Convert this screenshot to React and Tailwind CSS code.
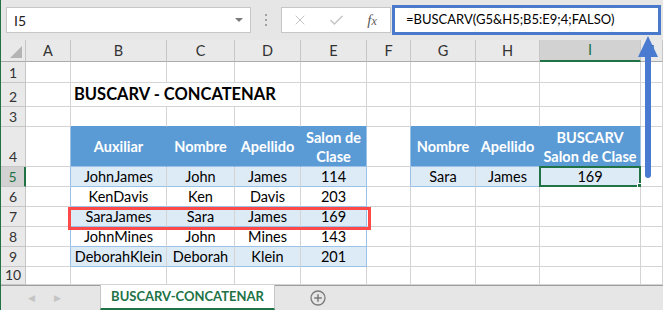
import React from "react";
import { X, Check } from "lucide-react";

const COLS = ["A", "B", "C", "D", "E", "F", "G", "H", "I", "J"];

const DATA = {
  4: { 2: ["Auxiliar"], 3: ["Nombre"], 4: ["Apellido"], 5: ["Salon de", "Clase"], 7: ["Nombre"], 8: ["Apellido"], 9: ["BUSCARV", "Salon de Clase"] },
  5: { 2: ["JohnJames"], 3: ["John"], 4: ["James"], 5: ["114"], 7: ["Sara"], 8: ["James"], 9: ["169"] },
  6: { 2: ["KenDavis"], 3: ["Ken"], 4: ["Davis"], 5: ["203"] },
  7: { 2: ["SaraJames"], 3: ["Sara"], 4: ["James"], 5: ["169"] },
  8: { 2: ["JohnMines"], 3: ["John"], 4: ["Mines"], 5: ["143"] },
  9: { 2: ["DeborahKlein"], 3: ["Deborah"], 4: ["Klein"], 5: ["201"] },
};

const inT1 = (r, c) => r >= 4 && r <= 9 && c >= 2 && c <= 5;
const inT2 = (r, c) => r >= 4 && r <= 5 && c >= 7 && c <= 9;

function cellClasses(r, c) {
  let bg = "bg-white text-black";
  let weight = "font-normal";
  if ((inT1(r, c) || inT2(r, c)) && r === 4) {
    bg = "bg-[#5b9bd5] text-white";
    weight = "font-bold";
  } else if ((inT1(r, c) && (r === 5 || r === 7 || r === 9)) || (inT2(r, c) && r === 5)) {
    bg = "bg-[#ddebf7] text-black";
  }
  let br = "border-r-[#d4d4d4]";
  if (r === 4 && ((c >= 2 && c <= 4) || (c >= 7 && c <= 8))) br = "border-r-[#5b9bd5]";
  if ((c === 1 || c === 5) && r >= 4 && r <= 9) br = "border-r-[#9bc2e6]";
  if ((c === 6 || c === 9) && r >= 4 && r <= 5) br = "border-r-[#9bc2e6]";
  let bb = "border-b-[#d4d4d4]";
  if (r === 3 && ((c >= 2 && c <= 5) || (c >= 7 && c <= 9))) bb = "border-b-[#5b9bd5]";
  if (inT1(r, c) || inT2(r, c)) bb = "border-b-[#9bc2e6]";
  return `${bg} ${weight} ${br} ${bb}`;
}

function Cell({ r, c }) {
  const lines = (DATA[r] && DATA[r][c]) || null;
  const selected = r === 5 && c === 9;
  return (
    <div
      className={`relative border-r border-b flex flex-col items-center justify-center text-[14.5px] leading-[19px] whitespace-nowrap ${cellClasses(r, c)}`}
    >
      {lines && lines.map((l, i) => <span key={i}>{l}</span>)}
      {selected && (
        <>
          <div className="absolute -left-[1px] -top-[1px] -right-[1px] -bottom-[1px] border-2 border-[#217346]" />
          <div className="absolute -right-[4px] -bottom-[4px] w-[7px] h-[7px] bg-[#217346] border border-white" />
        </>
      )}
    </div>
  );
}

function RowHeader({ r }) {
  const sel = r === 5;
  return (
    <div
      className={`flex items-end justify-center text-[14px] leading-[18px] border-b border-b-[#c6c6c6] ${
        sel
          ? "bg-[#d2d2d2] text-[#217346] border-r-2 border-r-[#217346]"
          : "bg-[#e9e9e9] text-[#333333] border-r border-r-[#c6c6c6]"
      }`}
    >
      {r}
    </div>
  );
}

export default function App() {
  const rows = [1, 2, 3, 4, 5, 6, 7, 8, 9, 10];
  return (
    <div className="relative w-[663px] h-[310px] overflow-hidden bg-[#e6e6e6] border-l border-[#217346] font-['Lato','Open_Sans',sans-serif]">
      {/* Top bar */}
      <div className="flex items-start h-[40px]">
        <div className="ml-[5px] mt-[7px] w-[245px] h-[26px] bg-white border border-[#c6c6c6] flex items-center justify-between pl-[7px] pr-[7px] text-[14px] text-[#222]">
          <span>I5</span>
          <span className="w-0 h-0 border-l-[4px] border-r-[4px] border-t-[4px] border-l-transparent border-r-transparent border-t-[#7a7a7a]" />
        </div>
        <div className="w-[30px] mt-[14px] flex flex-col items-center gap-[3px]">
          <span className="w-[2px] h-[2px] bg-[#a0a0a0]" />
          <span className="w-[2px] h-[2px] bg-[#a0a0a0]" />
          <span className="w-[2px] h-[2px] bg-[#a0a0a0]" />
        </div>
        <div className="mt-[7px] w-[110px] h-[26px] bg-white border border-[#c6c6c6] grid grid-cols-3 items-center justify-items-center">
          <X size={16} strokeWidth={1.4} color="#bdbdbd" />
          <Check size={17} strokeWidth={2} color="#c4c4c4" />
          <span className="font-['Liberation_Serif',serif] italic text-[15px] text-[#5a5a5a] leading-none">
            f<span className="text-[12px]">x</span>
          </span>
        </div>
        <div className="ml-[1px] mt-[5px] w-[269px] h-[30px] bg-white border-[3px] border-[#4a79cc] flex items-center pl-[11px] text-[13px] text-black whitespace-nowrap">
          =BUSCARV(G5&amp;H5;B5:E9;4;FALSO)
        </div>
      </div>

      {/* Grid */}
      <div className="grid grid-cols-[25px_45px_96px_68px_66px_66px_44px_65px_64px_101px_22px] grid-rows-[22px_21px_24px_20px_40px_20px_20px_20px_20px_20px_18px]">
        {/* Header row */}
        <div className="relative bg-[#e9e9e9] border-r border-b border-r-[#c6c6c6] border-b-[#ababab]">
          <svg className="absolute right-[3px] bottom-[3px]" width="12" height="12" viewBox="0 0 12 12">
            <polygon points="12,0 12,12 0,12" fill="#b4b4b4" />
          </svg>
        </div>
        {COLS.map((col) => (
          <div
            key={col}
            className={`flex items-center justify-center text-[14.5px] ${
              col === "I"
                ? "bg-[#d2d2d2] text-[#217346] border-b-2 border-b-[#217346] border-r border-r-[#c6c6c6]"
                : "bg-[#e9e9e9] text-[#333333] border-b border-b-[#ababab] border-r border-r-[#c6c6c6]"
            }`}
          >
            {col}
          </div>
        ))}

        {rows.map((r) => (
          <React.Fragment key={r}>
            <RowHeader r={r} />
            {r === 2 ? (
              <>
                <Cell r={2} c={1} />
                <div className="col-span-3 bg-white border-r border-b border-r-[#d4d4d4] border-b-[#d4d4d4] flex items-center pl-[3px] text-[16.5px] font-bold text-black whitespace-nowrap">
                  BUSCARV - CONCATENAR
                </div>
                {[5, 6, 7, 8, 9, 10].map((c) => (
                  <Cell key={c} r={2} c={c} />
                ))}
              </>
            ) : (
              [1, 2, 3, 4, 5, 6, 7, 8, 9, 10].map((c) => <Cell key={c} r={r} c={c} />)
            )}
          </React.Fragment>
        ))}
      </div>

      {/* Sheet tabs */}
      <div className="flex h-[25px] border-t border-[#9e9e9e] bg-[#e6e6e6]">
        <div className="w-[99px] flex items-center">
          <span className="ml-[27px] text-[9px] text-[#c4c4c4]">◀</span>
          <span className="ml-[19px] text-[9px] text-[#c4c4c4]">▶</span>
        </div>
        <div className="w-[175px] -mt-[1px] bg-white border-x border-[#c6c6c6] border-b-2 border-b-[#217346] flex items-center justify-center text-[13px] font-bold text-[#217346]">
          BUSCARV-CONCATENAR
        </div>
        <div className="ml-[35px] flex items-center">
          <svg width="16" height="16" viewBox="0 0 16 16">
            <circle cx="8" cy="8" r="7" fill="none" stroke="#7a7a7a" strokeWidth="1.3" />
            <path d="M8 4.2v7.6M4.2 8h7.6" stroke="#7a7a7a" strokeWidth="1.5" />
          </svg>
        </div>
      </div>

      {/* Red highlight around row 7 */}
      <div className="absolute left-[67px] top-[207px] w-[303px] h-[23px] border-[3px] border-[#ff4848]" />

      {/* Blue arrow */}
      <svg className="absolute left-[635px] top-[36px]" width="24" height="144" viewBox="0 0 24 144">
        <polygon points="12,0 22,21 2,21" fill="#4b7bd0" />
        <rect x="9" y="18" width="6" height="124" rx="3" fill="#4b7bd0" />
      </svg>
    </div>
  );
}
